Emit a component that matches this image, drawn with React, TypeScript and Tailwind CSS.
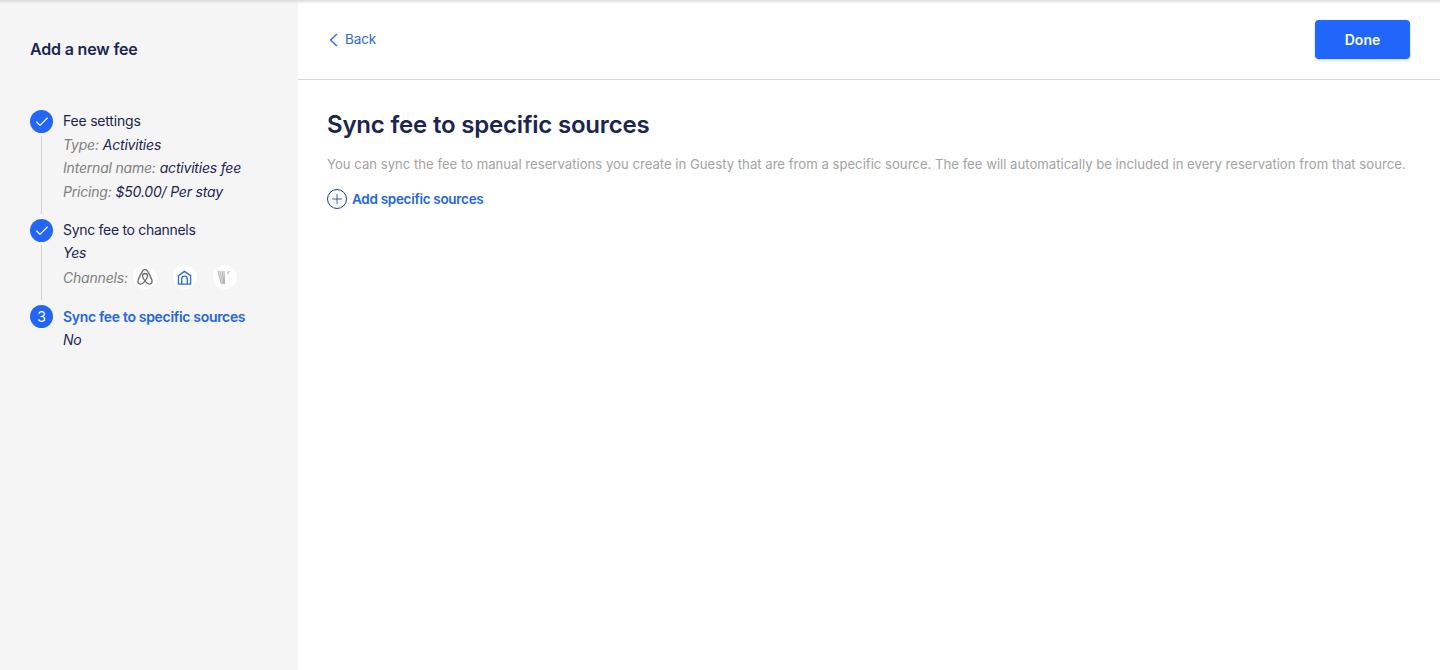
import { Check, Plus } from "lucide-react";
import type { ReactNode } from "react";

const font = "font-['Inter','Noto_Sans',sans-serif]";

function Row({ label, children }: { label?: string; children: ReactNode }) {
  return (
    <div className="flex h-[23.5px] items-center gap-[4px] text-[14px] italic tracking-[-0.2px] text-[#1a2550]">
      {label && <span className="text-[#808080]">{label}</span>}
      {children}
    </div>
  );
}

function Step({
  marker,
  last,
  children,
}: {
  marker: ReactNode;
  last?: boolean;
  children: ReactNode;
}) {
  return (
    <div className="flex gap-[10px]">
      <div className="flex w-[23px] shrink-0 flex-col items-center">
        <div className="flex h-[23px] w-[23px] shrink-0 items-center justify-center rounded-full bg-[#2366f5] text-[14px] text-white">
          {marker}
        </div>
        {!last && <div className="mb-[5px] mt-[3px] w-px flex-1 bg-[#d2d2d2]" />}
      </div>
      <div className={last ? "" : "-mt-px pb-[16px]"}>{children}</div>
    </div>
  );
}

function ChannelBadge({ children }: { children: ReactNode }) {
  return (
    <div className="flex h-[24px] w-[24px] items-center justify-center rounded-full bg-white">
      {children}
    </div>
  );
}

function AirbnbIcon() {
  return (
    <svg width="18" height="18" viewBox="0 0 24 24" fill="none" stroke="#6f6f6f" strokeWidth="1.8">
      <path d="M12 17.5c-2-2.6-3.4-5-3.4-6.800a3.400 3.400 0 0 1 6.800 0c0 1.800-1.400 4.200-3.400 6.800Zm0 0c2.400 3 5 4.400 7 3.700 2.200-.8 3-3 2.100-5.300C19.600 12 17.400 7.500 15.300 4.300 14.300 2.700 13.200 2 12 2s-2.300.7-3.300 2.300C6.600 7.500 4.400 12 2.900 15.900c-.9 2.300-.1 4.500 2.100 5.300 2 .7 4.600-.7 7-3.700Z" />
    </svg>
  );
}

function HomeAwayIcon() {
  return (
    <svg width="15" height="15" viewBox="0 0 16 16" fill="none" stroke="#2a6bd8" strokeWidth="1.4">
      <path d="M1.500 15V6l6.500-4.500L14.500 6v9Z" />
      <path d="M5 15V9.500a3 3 0 0 1 6 0V15" />
    </svg>
  );
}

function VrboIcon() {
  return (
    <svg width="17" height="17" viewBox="0 0 17 17" fill="none" stroke="#b0b0b0" strokeWidth="1.100">
      <path d="M2 2l3.500 13M4 2l3 13M6 2l2.200 13M8 2l.5 13" />
      <path d="M11 5.500l.7-3 2.800-.5-2 2.200Z" fill="#bdbdbd" stroke="none" />
    </svg>
  );
}

export default function App() {
  return (
    <div className={`${font} relative flex h-[670px] w-[1440px] overflow-hidden bg-white`}>
      {/* Top shadow */}
      <div className="absolute inset-x-0 top-0 h-[4px] bg-gradient-to-b from-[#dcdcdc] to-transparent" />

      {/* Sidebar */}
      <aside className="w-[298px] shrink-0 bg-[#f5f5f5] pl-[30px] pt-[39px]">
        <h2 className="text-[16px] leading-[20px] font-semibold tracking-[-0.17px] text-[#1a2550]">
          Add a new fee
        </h2>
        <div className="mt-[51px] flex flex-col">
          <Step marker={<Check size={16} strokeWidth={1.75} />}>
            <div className="flex h-[23.5px] items-center text-[14px] tracking-[-0.2px] text-[#1a2550]">
              Fee settings
            </div>
            <Row label="Type:">Activities</Row>
            <Row label="Internal name:">activities fee</Row>
            <Row label="Pricing:">$50.00/ Per stay</Row>
          </Step>
          <Step marker={<Check size={16} strokeWidth={1.75} />}>
            <div className="flex h-[22.5px] items-center text-[14px] tracking-[-0.3px] text-[#1a2550]">
              Sync fee to channels
            </div>
            <Row>Yes</Row>
            <div className="mt-px flex h-[24px] items-center text-[14px] italic tracking-[-0.2px] text-[#808080]">
              <span className="mr-[5px]">Channels:</span>
              <div className="flex gap-[16px]">
                <ChannelBadge><AirbnbIcon /></ChannelBadge>
                <ChannelBadge><HomeAwayIcon /></ChannelBadge>
                <ChannelBadge><VrboIcon /></ChannelBadge>
              </div>
            </div>
          </Step>
          <Step marker="3" last>
            <div className="flex h-[22.5px] items-center text-[14px] font-semibold tracking-[-0.32px] text-[#2366e0]">
              Sync fee to specific sources
            </div>
            <Row>No</Row>
          </Step>
        </div>
      </aside>

      {/* Main */}
      <main className="flex-1">
        <header className="flex h-[80px] items-center justify-between border-b border-[#d6d6d6] pl-[29px] pr-[30px]">
          <button className="flex items-center gap-[7px] text-[13.5px] tracking-[-0.1px] text-[#2d68d8]">
            <svg width="9" height="14" viewBox="0 0 9 14" fill="none" stroke="#2d68d8" strokeWidth="1.300" className="ml-[2px]">
              <path d="M8 1L1.500 7 8 13" />
            </svg>
            Back
          </button>
          <button className="h-[39px] w-[95px] rounded-[4px] bg-[#2166fb] pb-px text-[14px] font-semibold text-white shadow-[0_1px_3px_rgba(33,102,251,0.3)]">
            Done
          </button>
        </header>
        <div className="pl-[29px] pt-[29px]">
          <h1 className="text-[24px] leading-[32px] font-semibold tracking-[-0.19px] text-[#1a2550]">
            Sync fee to specific sources
          </h1>
          <p className="mt-[12px] text-[13.15px] leading-[22px] whitespace-nowrap text-[#a3a3a3]">
            You can sync the fee to manual reservations you create in Guesty that are from a specific source. The fee will automatically be included in every reservation from that source.
          </p>
          <button className="mt-[14px] flex items-center gap-[5px] text-[13.5px] font-semibold tracking-[-0.3px] text-[#2366e0]">
            <span className="flex h-[20px] w-[20px] items-center justify-center rounded-full border border-[#1f3f8f] text-[#1f3f8f]">
              <Plus size={16} strokeWidth={1.25} />
            </span>
            Add specific sources
          </button>
        </div>
      </main>
    </div>
  );
}
